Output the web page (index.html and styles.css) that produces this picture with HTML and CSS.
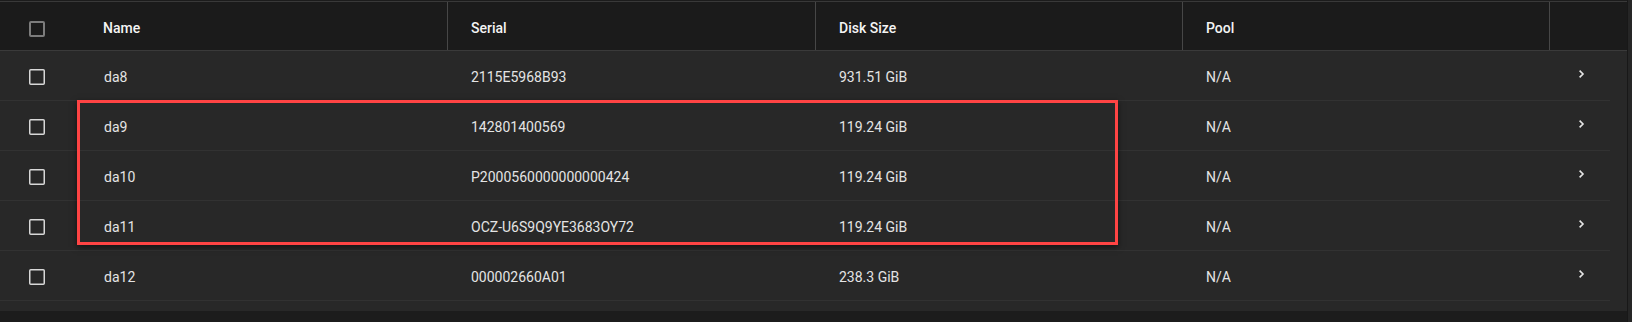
FILE: index.html
```html
<!DOCTYPE html>
<html lang="en">
<head>
<meta charset="utf-8">
<title>Disks</title>
<link rel="stylesheet" href="styles.css">
</head>
<body>
<div class="page">
  <div class="card">
    <div class="thead">
      <div class="cell cb"><svg class="box box-head" width="16" height="16" viewBox="0 0 16 16"><rect x="1" y="1" width="14" height="14" rx="1"/></svg></div>
      <div class="cell th">Name</div>
      <div class="cell th div">Serial</div>
      <div class="cell th div">Disk Size</div>
      <div class="cell th div">Pool</div>
      <div class="cell th div"></div>
    </div>
    <div class="tbody">
      <div class="row">
        <div class="cell cb"><svg class="box" width="16" height="16" viewBox="0 0 16 16"><rect x="0.75" y="0.75" width="14.5" height="14.5" rx="1"/></svg></div>
        <div class="cell td">da8</div>
        <div class="cell td">2115E5968B93</div>
        <div class="cell td">931.51 GiB</div>
        <div class="cell td">N/A</div>
        <div class="cell act"><svg class="chev" width="10" height="10" viewBox="0 0 10 10"><path d="M2.6 1.6 L6 5 L2.6 8.4"/></svg></div>
      </div>
      <div class="row">
        <div class="cell cb"><svg class="box" width="16" height="16" viewBox="0 0 16 16"><rect x="0.75" y="0.75" width="14.5" height="14.5" rx="1"/></svg></div>
        <div class="cell td">da9</div>
        <div class="cell td">142801400569</div>
        <div class="cell td">119.24 GiB</div>
        <div class="cell td">N/A</div>
        <div class="cell act"><svg class="chev" width="10" height="10" viewBox="0 0 10 10"><path d="M2.6 1.6 L6 5 L2.6 8.4"/></svg></div>
      </div>
      <div class="row">
        <div class="cell cb"><svg class="box" width="16" height="16" viewBox="0 0 16 16"><rect x="0.75" y="0.75" width="14.5" height="14.5" rx="1"/></svg></div>
        <div class="cell td">da10</div>
        <div class="cell td">P2000560000000000424</div>
        <div class="cell td">119.24 GiB</div>
        <div class="cell td">N/A</div>
        <div class="cell act"><svg class="chev" width="10" height="10" viewBox="0 0 10 10"><path d="M2.6 1.6 L6 5 L2.6 8.4"/></svg></div>
      </div>
      <div class="row">
        <div class="cell cb"><svg class="box" width="16" height="16" viewBox="0 0 16 16"><rect x="0.75" y="0.75" width="14.5" height="14.5" rx="1"/></svg></div>
        <div class="cell td">da11</div>
        <div class="cell td">OCZ-U6S9Q9YE3683OY72</div>
        <div class="cell td">119.24 GiB</div>
        <div class="cell td">N/A</div>
        <div class="cell act"><svg class="chev" width="10" height="10" viewBox="0 0 10 10"><path d="M2.6 1.6 L6 5 L2.6 8.4"/></svg></div>
      </div>
      <div class="row">
        <div class="cell cb"><svg class="box" width="16" height="16" viewBox="0 0 16 16"><rect x="0.75" y="0.75" width="14.5" height="14.5" rx="1"/></svg></div>
        <div class="cell td">da12</div>
        <div class="cell td">000002660A01</div>
        <div class="cell td">238.3 GiB</div>
        <div class="cell td">N/A</div>
        <div class="cell act"><svg class="chev" width="10" height="10" viewBox="0 0 10 10"><path d="M2.6 1.6 L6 5 L2.6 8.4"/></svg></div>
      </div>
    </div>
    <div class="highlight"></div>
  </div>
  <div class="scroll"></div>
</div>
</body>
</html>
```

FILE: styles.css
```css
html, body {
  margin: 0;
  padding: 0;
  background: #1c1c1c;
}

body {
  font-family: Roboto, "Liberation Sans", Arial, sans-serif;
  font-size: 14px;
}

.page {
  display: flex;
  height: 322px;
  background: #1c1c1c;
}

.card {
  position: relative;
  width: 1627px;
  flex: none;
  align-self: flex-start;
  margin-top: 1px;
  border-top: 1px solid #393939;
  background: #282828;
  padding-bottom: 10px;
}

.scroll {
  flex: 1;
  border-left: 1px solid #181818;
  background: #262626;
}

.thead {
  display: grid;
  grid-template-columns: 80px 367px 368px 367px 367px 78px;
  height: 49px;
  box-sizing: border-box;
  background: #1b1b1b;
  border-bottom: 1px solid #3a3a3a;
}

.cell {
  display: flex;
  align-items: center;
  box-sizing: border-box;
  white-space: nowrap;
}

.thead .cell {
  padding-top: 4px;
}

.th {
  padding-left: 23px;
  color: #f4f4f4;
  font-weight: 500;
}

.th.div {
  border-left: 1px solid #474747;
}

.cb {
  padding-left: 29px;
}

.box {
  display: block;
  fill: none;
  stroke: #d8d8d8;
  stroke-width: 1.5;
}

.box-head {
  stroke: #7c7c7c;
  stroke-width: 2;
  margin-top: 2px;
}

.row {
  display: grid;
  grid-template-columns: 80px 367px 368px 367px 367px 61px;
  width: 1610px;
  height: 50px;
  box-sizing: border-box;
  border-bottom: 1px solid #323232;
}

.row .cell {
  padding-top: 2px;
}

.td {
  padding-left: 24px;
  color: #e4e4e4;
}

.act {
  padding-left: 28px;
}

.chev {
  display: block;
  margin-bottom: 5px;
  fill: none;
  stroke: #e6e6e6;
  stroke-width: 1.6;
}

.highlight {
  position: absolute;
  left: 77px;
  top: 98px;
  width: 1041px;
  height: 145px;
  box-sizing: border-box;
  border: 3px solid #ff4444;
  box-shadow: 0 2px 6px rgba(0, 0, 0, 0.55);
  pointer-events: none;
}
```
